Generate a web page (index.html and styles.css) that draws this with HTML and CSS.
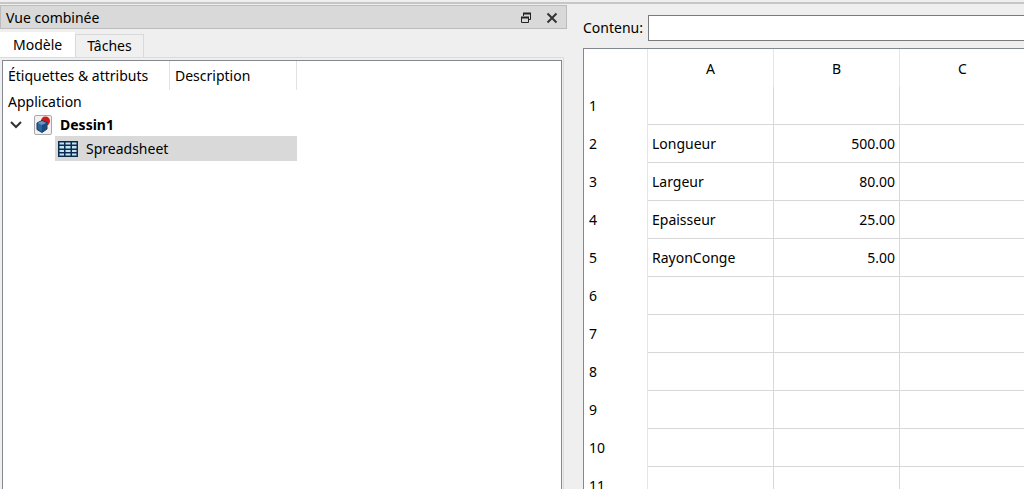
FILE: index.html
```html
<!DOCTYPE html>
<html lang="fr">
<head>
    <meta charset="UTF-8">
    <meta name="viewport" content="width=device-width, initial-scale=1.0">
    <title>Dessin1</title>
    <link rel="stylesheet" href="styles.css">
</head>
<body>
    <div class="window">
        <section class="dock">
            <header class="dock-title">
                <h1>Vue combinée</h1>
                <button type="button" aria-label="Détacher">
                    <svg width="12" height="12" viewBox="0 0 12 12" fill="none" stroke="#222">
                        <path d="M3.500 4V1.500h7v6H8.500" />
                        <path d="M3 1.500h8" stroke-width="2" />
                        <path d="M1.500 5.500h7v5h-7z" />
                        <path d="M1 5.500h8" stroke-width="2" />
                    </svg>
                </button>
                <button type="button" aria-label="Fermer">
                    <svg width="12" height="12" viewBox="0 0 12 12" fill="none" stroke="#333" stroke-width="2">
                        <path d="M1.500 1.500l9 9M10.500 1.500l-9 9" />
                    </svg>
                </button>
            </header>
            <div class="tabs" role="tablist">
                <button type="button" class="tab active" role="tab" aria-selected="true">Modèle</button>
                <button type="button" class="tab" role="tab" aria-selected="false">Tâches</button>
            </div>
            <div class="pane">
                <div class="tree">
                    <div class="tree-header">
                        <span class="col-label">Étiquettes &amp; attributs</span>
                        <span class="col-desc">Description</span>
                    </div>
                    <div class="tree-row">Application</div>
                    <div class="tree-row document">
                        <svg class="chevron" width="12" height="8" viewBox="0 0 12 8" fill="none" stroke="#333" stroke-width="2">
                            <path d="M1 1l5 5 5-5" />
                        </svg>
                        <svg width="18" height="20" viewBox="0 0 18 20">
                            <rect x="0.500" y="0.500" width="17" height="19" rx="1.500" fill="#f1f1f2" stroke="#a9a9ab" />
                            <circle cx="11.500" cy="6" r="4.500" fill="#d11b1b" />
                            <path d="M3 8l5-2.500 5 2v6.500l-5 3.500-5-3z" fill="#2b659f" stroke="#173756" />
                            <path d="M3.500 8l4.500-2 4.500 2-4.500 2z" fill="#6796c4" />
                            <path d="M8 10l4.500-2v6L8 17z" fill="#1d4b7d" />
                        </svg>
                        <strong>Dessin1</strong>
                    </div>
                    <div class="tree-row item">
                        <svg width="20" height="16" viewBox="0 0 20 16">
                            <path d="M0 0h20v16H0z" fill="#0b2c4d" />
                            <g fill="#c4e3f4">
                                <path d="M1.500 1.500h4.500v2H1.500zM1.500 5h4.500v2.500H1.500zM1.500 9h4.500v2H1.500zM1.500 12.500h4.500v2H1.500z" />
                                <path d="M7.500 1.500h5v2h-5zM7.500 5h5v2.500h-5zM7.500 9h5v2h-5zM7.500 12.500h5v2h-5z" />
                                <path d="M14 1.500h4.500v2H14zM14 5h4.500v2.500H14zM14 9h4.500v2H14zM14 12.500h4.500v2H14z" />
                            </g>
                        </svg>
                        <span>Spreadsheet</span>
                    </div>
                </div>
            </div>
        </section>

        <main class="sheet">
            <div class="content-bar">
                <label for="content">Contenu:</label>
                <input type="text" id="content" name="content">
            </div>
            <div class="grid">
                <table>
                    <thead>
                        <tr><th class="corner"></th><th>A</th><th>B</th><th>C</th></tr>
                    </thead>
                    <tbody>
                        <tr><th>1</th><td></td><td></td><td></td></tr>
                        <tr><th>2</th><td>Longueur</td><td class="num">500.00</td><td></td></tr>
                        <tr><th>3</th><td>Largeur</td><td class="num">80.00</td><td></td></tr>
                        <tr><th>4</th><td>Epaisseur</td><td class="num">25.00</td><td></td></tr>
                        <tr><th>5</th><td>RayonConge</td><td class="num">5.00</td><td></td></tr>
                        <tr><th>6</th><td></td><td></td><td></td></tr>
                        <tr><th>7</th><td></td><td></td><td></td></tr>
                        <tr><th>8</th><td></td><td></td><td></td></tr>
                        <tr><th>9</th><td></td><td></td><td></td></tr>
                        <tr><th>10</th><td></td><td></td><td></td></tr>
                        <tr><th>11</th><td></td><td></td><td></td></tr>
                    </tbody>
                </table>
            </div>
        </main>
    </div>
</body>
</html>
```
FILE: styles.css
```css
* {
    box-sizing: border-box;
}
body {
    margin: 0;
    background-color: #efefef;
    color: #000;
    font-family: "Segoe UI", "Noto Sans", sans-serif;
    font-size: 14px;
    line-height: 20px;
}
button,
input {
    font: inherit;
    color: inherit;
}
.window {
    display: grid;
    grid-template-columns: 567fr 457fr;
    height: 100vh;
    overflow: hidden;
    border-top: 2px solid #efefef;
    box-shadow: inset 0 2px 0 #c6c6c6;
}

/* Left dock */
.dock {
    display: flex;
    flex-direction: column;
    min-width: 0;
    padding-top: 3px;
}
.dock-title {
    display: flex;
    align-items: center;
    height: 24px;
    padding: 1px 5px 0;
    background-color: #d9d9d9;
    border: 1px solid #bcbcbc;
}
.dock-title h1 {
    flex: 1;
    margin: 0;
    font-size: 14px;
    font-weight: 400;
    line-height: 22px;
}
.dock-title button {
    display: flex;
    margin-left: 8px;
    padding: 3px;
    border: none;
    background: none;
}
.tabs {
    display: flex;
    align-items: flex-end;
    margin-top: 3px;
}
.tab {
    height: 23px;
    padding: 0 11px;
    border: 1px solid #d9d9d9;
    border-bottom: none;
    background-color: #f0f0f0;
}
.tab.active {
    height: 25px;
    padding: 0 12px;
    border-color: #fff;
    background-color: #fff;
}
.pane {
    flex: 1;
    display: flex;
    margin-right: 3px;
    padding: 2px 1px 0 2px;
    border: 1px solid #dcdcdc;
    border-width: 1px 1px 0 0;
}
.tree {
    flex: 1;
    min-width: 0;
    border: 1px solid #828790;
    border-bottom: none;
    background-color: #fff;
}
.tree-header {
    display: flex;
    height: 29px;
    line-height: 29px;
}
.tree-header span {
    padding-left: 5px;
    border-right: 1px solid #e2e2e2;
    white-space: nowrap;
}
.col-label {
    width: 167px;
}
.col-desc {
    width: 127px;
}
.tree-row {
    display: flex;
    align-items: center;
    height: 23px;
    padding-left: 5px;
}
.document {
    gap: 8px;
}
.document .chevron {
    margin: 0 4px 0 2px;
}
.item {
    gap: 8px;
    width: 242px;
    height: 25px;
    margin-left: 52px;
    padding-left: 3px;
    background-color: #d9d9d9;
}

/* Spreadsheet */
.sheet {
    display: flex;
    flex-direction: column;
    min-width: 0;
    padding: 13px 0 0 16px;
}
.content-bar {
    display: flex;
    align-items: center;
    gap: 5px;
}
.content-bar input {
    flex: 1;
    min-width: 0;
    height: 26px;
    padding: 0 4px;
    border: 1px solid #7a7a7a;
    border-right: none;
    background-color: #fff;
}
.grid {
    flex: 1;
    min-height: 0;
    margin-top: 7px;
    overflow: hidden;
    border: 1px solid #828790;
    border-width: 1px 0 0 1px;
    background-color: #fff;
}
table {
    width: 442px;
    table-layout: fixed;
    border-collapse: separate;
    border-spacing: 0;
}
th,
td {
    height: 38px;
    padding: 0 4px;
    border-right: 1px solid #d8d8d8;
    border-bottom: 1px solid #d8d8d8;
    font-weight: 400;
    text-align: left;
}
thead th {
    padding-top: 2px;
    border-color: #e5e5e5;
    border-bottom: none;
    text-align: center;
}
tbody th,
.corner {
    width: 64px;
    padding-left: 5px;
    border-color: #e5e5e5;
    border-bottom: none;
}
.num {
    text-align: right;
}
```
